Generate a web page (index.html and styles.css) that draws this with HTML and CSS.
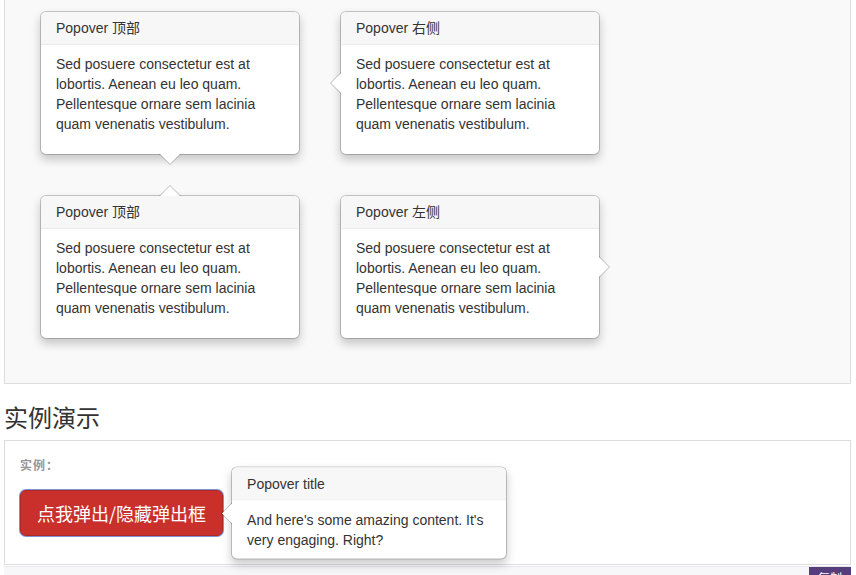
FILE: index.html
```html
<!DOCTYPE html>
<html lang="zh-CN">
<head>
<meta charset="utf-8">
<title>Popover 实例</title>
<link rel="stylesheet" href="styles.css">
</head>
<body>
<div class="page">
  <div class="example example-popovers">
    <div class="popover top">
      <div class="arrow"></div>
      <h3 class="popover-title">Popover 顶部</h3>
      <div class="popover-content"><p>Sed posuere consectetur est at lobortis. Aenean eu leo quam. Pellentesque ornare sem lacinia quam venenatis vestibulum.</p></div>
    </div>
    <div class="popover right">
      <div class="arrow"></div>
      <h3 class="popover-title">Popover 右侧</h3>
      <div class="popover-content"><p>Sed posuere consectetur est at lobortis. Aenean eu leo quam. Pellentesque ornare sem lacinia quam venenatis vestibulum.</p></div>
    </div>
    <div class="popover bottom">
      <div class="arrow"></div>
      <h3 class="popover-title">Popover 顶部</h3>
      <div class="popover-content"><p>Sed posuere consectetur est at lobortis. Aenean eu leo quam. Pellentesque ornare sem lacinia quam venenatis vestibulum.</p></div>
    </div>
    <div class="popover left">
      <div class="arrow"></div>
      <h3 class="popover-title">Popover 左侧</h3>
      <div class="popover-content"><p>Sed posuere consectetur est at lobortis. Aenean eu leo quam. Pellentesque ornare sem lacinia quam venenatis vestibulum.</p></div>
    </div>
  </div>

  <h2 class="section-title">实例演示</h2>

  <div class="example example-live">
    <div class="example-label">实例：</div>
    <div class="trigger-wrap">
      <button class="btn-danger" type="button">点我弹出/隐藏弹出框</button>
      <div class="popover right live">
        <div class="arrow"></div>
        <h3 class="popover-title">Popover title</h3>
        <div class="popover-content">And here's some amazing content. It's very engaging. Right?</div>
      </div>
    </div>
  </div>

  <div class="highlight">
    <span class="copy-btn">复制</span>
  </div>
</div>
</body>
</html>
```

FILE: styles.css
```css
* { box-sizing: border-box; }

html, body {
  margin: 0;
  padding: 0;
  background: #fff;
  overflow: hidden;
}

body {
  font-family: "Liberation Sans", Arial, "Noto Sans CJK SC", sans-serif;
  font-size: 14px;
  line-height: 20px;
  color: #333;
}

.page {
  padding: 0 5px 0 4px;
}

.example {
  border: 1px solid #ddd;
}

.example-popovers {
  border-top: 0;
  background: #f9f9f9;
  padding: 11px 15px 44px 35px;
  display: grid;
  grid-template-columns: 260px 260px;
  gap: 40px;
}

.popover {
  position: relative;
  width: 260px;
  background: #fff;
  border: 1px solid rgba(0, 0, 0, 0.2);
  border-radius: 6px;
  box-shadow: 0 5px 10px rgba(0, 0, 0, 0.2);
  background-clip: padding-box;
}

.popover-title {
  margin: 0;
  padding: 8px 14px 8px 15px;
  font-size: 14px;
  font-weight: normal;
  line-height: 16px;
  background: #f7f7f7;
  border-bottom: 1px solid #ebebeb;
  border-radius: 5px 5px 0 0;
}

.popover-content {
  padding: 9px 14px 9px 15px;
}

.popover-content p {
  margin: 0 0 11px;
}

/* arrows */
.arrow,
.arrow::after {
  position: absolute;
  display: block;
  width: 0;
  height: 0;
  border-color: transparent;
  border-style: solid;
}

.arrow { border-width: 11px; }
.arrow::after { content: ""; border-width: 10px; }

.popover.top .arrow {
  bottom: -11px;
  left: 50%;
  margin-left: -11px;
  border-bottom-width: 0;
  border-top-color: rgba(0, 0, 0, 0.25);
}
.popover.top .arrow::after {
  bottom: 1px;
  margin-left: -10px;
  border-bottom-width: 0;
  border-top-color: #fff;
}

.popover.bottom .arrow {
  top: -11px;
  left: 50%;
  margin-left: -11px;
  border-top-width: 0;
  border-bottom-color: rgba(0, 0, 0, 0.25);
}
.popover.bottom .arrow::after {
  top: 1px;
  margin-left: -10px;
  border-top-width: 0;
  border-bottom-color: #fff;
}

.popover.right .arrow {
  top: 50%;
  left: -11px;
  margin-top: -11px;
  border-left-width: 0;
  border-right-color: rgba(0, 0, 0, 0.25);
}
.popover.right .arrow::after {
  left: 1px;
  bottom: -10px;
  border-left-width: 0;
  border-right-color: #fff;
}

.popover.left .arrow {
  top: 50%;
  right: -11px;
  margin-top: -11px;
  border-right-width: 0;
  border-left-color: rgba(0, 0, 0, 0.25);
}
.popover.left .arrow::after {
  right: 1px;
  bottom: -10px;
  border-right-width: 0;
  border-left-color: #fff;
}

.section-title {
  margin: 22px 0 8px;
  font-family: "Liberation Sans", "Noto Sans CJK SC", sans-serif;
  font-size: 24px;
  font-weight: normal;
  line-height: 26px;
  color: #333;
}

.example-live {
  background: #fff;
  padding: 15px 15px 28px;
}

.example-label {
  font-family: "Noto Sans CJK SC", sans-serif;
  font-size: 12px;
  font-weight: bold;
  line-height: 17px;
  letter-spacing: 1px;
  color: #959595;
}

.trigger-wrap {
  position: relative;
  display: inline-block;
  margin-top: 17px;
  vertical-align: top;
}

.btn-danger {
  display: block;
  margin: 0;
  padding: 10px 16px;
  font-family: "Noto Sans CJK SC", sans-serif;
  font-size: 18px;
  line-height: 24px;
  color: #fff;
  background: #c9302c;
  border: 1px solid #ac2925;
  border-radius: 6px;
  box-shadow: 0 0 0 1px #8193d8;
  cursor: pointer;
}

.popover.live {
  position: absolute;
  left: calc(100% + 8px);
  top: 50%;
  transform: translateY(-50%);
  width: 276px;
}

.highlight {
  margin-top: 1px;
  height: 20px;
  background: #f7f7f9;
  border-top: 1px solid #e8e8ec;
  display: flex;
  justify-content: flex-end;
}

.copy-btn {
  display: block;
  width: 42px;
  height: 20px;
  background: #563d7c;
  color: #fff;
  font-family: "Noto Sans CJK SC", sans-serif;
  font-size: 12px;
  line-height: 12px;
  padding-top: 5px;
  text-align: center;
}
```
